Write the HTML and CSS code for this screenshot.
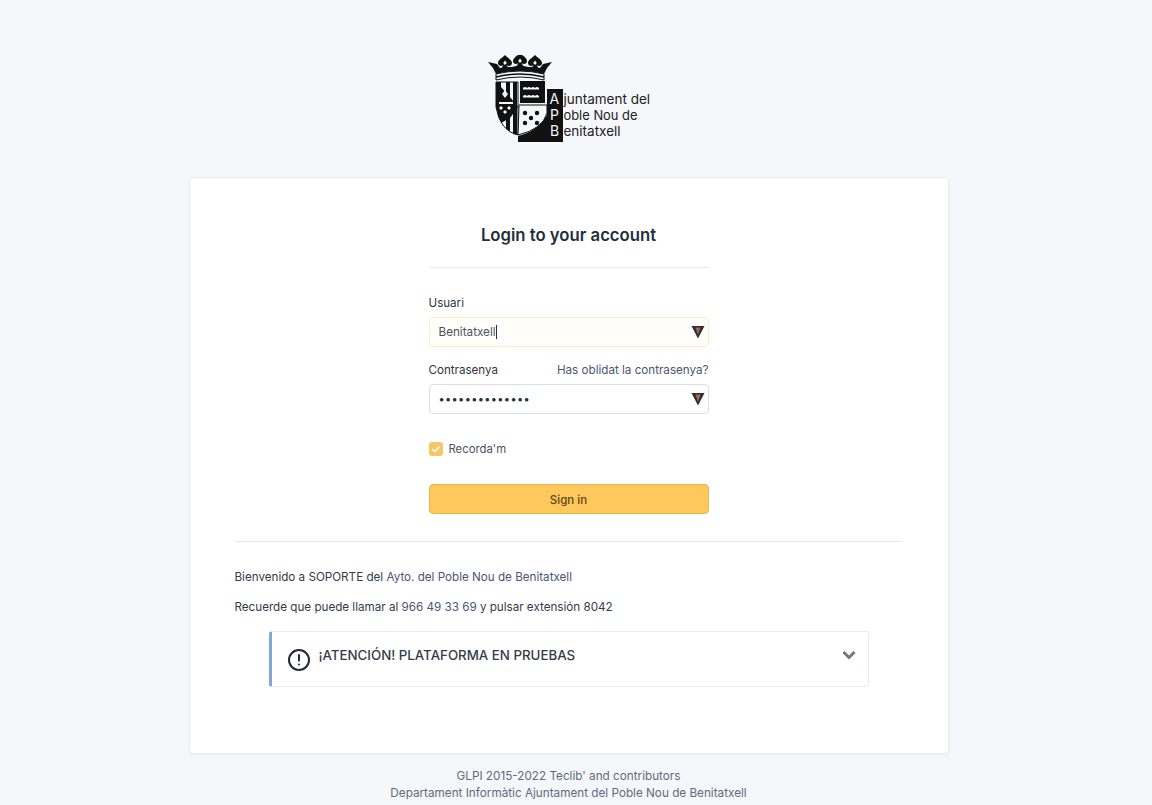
FILE: index.html
```html
<!DOCTYPE html>
<html lang="ca">
<head>
<meta charset="utf-8">
<title>Login</title>
<link rel="stylesheet" href="styles.css">
</head>
<body>
<div class="page">
  <header class="logo-wrap">
    <svg class="logo" width="166" height="90" viewBox="0 0 166 90" xmlns="http://www.w3.org/2000/svg">
      <defs>
        <g id="spade">
          <path d="M0 -8 C2.500 -5 7 -3.500 7 0 C7 3 3.500 4 1.800 2 L4 7 L-4 7 L-1.800 2 C-3.500 4 -7 3 -7 0 C-7 -3.500 -2.500 -5 0 -8 Z" fill="#111"/>
          <path d="M0 -2.500 L1.800 0 L0 2 L-1.800 0 Z" fill="#f5f7fb"/>
        </g>
      </defs>
      <path d="M0 7 L9 9 L12 13 L17 12 L24 12 L32 10 L40 12 L47 12 L52 13 L55 9 L64 7 L59 13 L56 19 Q32 13 8 19 L5 13 Z" fill="#111"/>
      <use href="#spade" x="17" y="8"/>
      <use href="#spade" x="32" y="6"/>
      <use href="#spade" x="47" y="8"/>
      <path d="M8 19 Q32 13 56 19 L56 25 Q32 19 8 25 Z" fill="#f5f7fb" stroke="#111" stroke-width="1"/>
      <path d="M8 22 Q32 16 56 22" fill="none" stroke="#111" stroke-width="1.500"/>
      <!-- shield left half -->
      <path d="M8 27 H30 V80 Q12 76 8 52 Z" fill="#f5f7fb" stroke="#111" stroke-width="1"/>
      <path d="M8 27 H13 V64 Q9 58 8 52 Z M18 27 H22 V76 L18 74 Z M25 27 H29 V80 L25 79 Z" fill="#111"/>
      <path d="M13 32 L22 42 L30 52 L22 63 L13 68 L10 60 L8 51 L13 44 Z" fill="#111"/>
      <g fill="#f5f7fb">
        <path d="M17 35 l3 4 l-3 4 l-3 -4 Z"/>
        <rect x="11" y="47" width="14" height="2"/>
        <path d="M13 51 l2 2 l-2 2 l-2 -2 Z M21 51 l2 2 l-2 2 l-2 -2 Z M17 55 l2 2 l-2 2 l-2 -2 Z"/>
      </g>
      <!-- shield right quarters -->
      <rect x="32" y="26" width="25" height="22" fill="#111"/>
      <path d="M35 33 q2 -2 4 0 q2 -2 4 0 q2 -2 4 0 q2 -2 4 0 v1.500 h-16 Z M35 41 q2 -2 4 0 q2 -2 4 0 q2 -2 4 0 q2 -2 4 0 v1.500 h-16 Z" fill="#f5f7fb"/>
      <path d="M31 50 H59 V58 Q55 74 30 80 Z" fill="#f5f7fb" stroke="#111" stroke-width="1"/>
      <g fill="#111">
        <circle cx="37" cy="58" r="2.200"/><circle cx="49" cy="58" r="2.200"/><circle cx="43" cy="63" r="2.200"/><circle cx="37" cy="68" r="2.200"/><circle cx="49" cy="68" r="2.200"/>
      </g>
      <!-- initials block -->
      <path d="M59 34 H75 V87 H30 V81 Q50 76 59 60 Z" fill="#111"/>
      <g class="logo-letters">
        <text x="61.500" y="49" class="logo-cap">A</text>
        <text x="62" y="65" class="logo-cap">P</text>
        <text x="62" y="81" class="logo-cap">B</text>
        <text x="75.500" y="49">juntament del</text>
        <text x="75.500" y="65" class="logo-mid">oble Nou de</text>
        <text x="75.500" y="81">enitatxell</text>
      </g>
    </svg>
  </header>

  <main class="card">
    <h1 class="title">Login to your account</h1>
    <form class="form">
      <div class="field">
        <div class="label-row"><label class="label">Usuari</label></div>
        <div class="input input-focus">
          <span class="value">Benitatxell</span><span class="caret"></span>
          <svg class="vault" width="14" height="14" viewBox="0 0 14 14"><path d="M0.500 1 H13.500 L7 13.500 Z" fill="#2a2f38"/><path d="M4.500 2.500 H9.500 L7 10 Z" fill="#b4613c"/></svg>
        </div>
      </div>
      <div class="field field-pass">
        <div class="label-row"><label class="label">Contrasenya</label><a class="link small-link">Has oblidat la contrasenya?</a></div>
        <div class="input">
          <span class="dots">••••••••••••••</span>
          <svg class="vault" width="14" height="14" viewBox="0 0 14 14"><path d="M0.500 1 H13.500 L7 13.500 Z" fill="#2a2f38"/><path d="M4.500 2.500 H9.500 L7 10 Z" fill="#b4613c"/></svg>
        </div>
      </div>
      <div class="remember">
        <span class="check"><svg width="14" height="14" viewBox="0 0 14 14"><path d="M3.500 7.200 L6 9.500 L10.500 4.800" fill="none" stroke="#fff" stroke-width="1.600"/></svg></span>
        <span class="remember-text">Recorda'm</span>
      </div>
      <button type="button" class="signin">Sign in</button>
    </form>
    <hr class="divider">
    <p class="msg">Bienvenido a SOPORTE del <a class="link">Ayto. del Poble Nou de Benitatxell</a></p>
    <p class="msg msg-2">Recuerde que puede llamar al <a class="link">966 49 33 69</a> y pulsar extensión 8042</p>
    <section class="alert">
      <svg class="alert-icon" width="24" height="24" viewBox="0 0 24 24" fill="none" stroke="#1e293b" stroke-width="2" stroke-linecap="round"><circle cx="12" cy="12" r="10"/><path d="M12 7 V12.500"/><path d="M12 16.500 V16.600"/></svg>
      <span class="alert-title">¡ATENCIÓN! PLATAFORMA EN PRUEBAS</span>
      <svg class="chev" width="14" height="10" viewBox="0 0 14 10"><path d="M1.500 2 L7 7.500 L12.500 2" fill="none" stroke="#6e7582" stroke-width="2.800"/></svg>
    </section>
  </main>

  <footer class="foot">
    <div>GLPI 2015-2022 Teclib' and contributors</div>
    <div>Departament Informàtic Ajuntament del Poble Nou de Benitatxell</div>
  </footer>
</div>
</body>
</html>
```
FILE: styles.css
```css
* { box-sizing: border-box; }
html, body { margin: 0; height: 100%; }
body {
  background: #f5f7fb;
  font-family: Inter, "Liberation Sans", sans-serif;
  color: #232e3c;
  font-size: 12px;
  overflow: hidden;
}
.page { width: 1137px; height: 805px; display: flex; flex-direction: column; align-items: center; }
.logo-wrap { height: 177px; width: 760px; padding: 55px 0 0 299px; }
.logo { display: block; }
.logo-letters text { font-family: Inter, "Liberation Sans", sans-serif; font-size: 13.500px; fill: #222; }
.logo-letters .logo-cap { fill: #f5f7fb; font-size: 14px; }
.logo-letters .logo-mid { font-size: 12.900px; }
.card {
  width: 760px;
  height: 577px;
  background: #fff;
  border: 1px solid #eaecf1;
  border-radius: 4px;
  box-shadow: 0 1px 3px rgba(35,46,60,.05);
  padding: 46px 45px 0;
  display: flex;
  flex-direction: column;
  align-items: stretch;
}
.title {
  width: 280px;
  align-self: center;
  margin: 0;
  padding-bottom: 21px;
  height: 44px;
  border-bottom: 1px solid #e6e8ee;
  text-align: center;
  font-size: 16.700px;
  line-height: 22px;
  font-weight: 600;
  color: #232e3c;
}
.form { width: 280px; align-self: center; margin-top: 26px; display: flex; flex-direction: column; }
.label-row { display: flex; justify-content: space-between; height: 18px; line-height: 18px; margin-bottom: 5px; }
.label { font-size: 11.600px; color: #2c3542; }
.small-link { font-size: 11.650px; }
.link { color: #4a5578; }
.input {
  height: 30px;
  border: 1px solid #d9dde5;
  border-radius: 4px;
  background: #fff;
  display: flex;
  align-items: center;
  padding: 0 3px 0 9px;
  position: relative;
  font-size: 11.700px;
  color: #4a5260;
}
.input-focus { border-color: #fbedc4; background: #fffefb; }
.value { line-height: 14px; }
.caret { width: 1px; height: 14px; background: #232e3c; }
.vault { margin-left: auto; }
.field-pass { margin-top: 14px; }
.dots { font-size: 11px; letter-spacing: 0.350px; color: #232e3c; }
.remember { display: flex; align-items: center; gap: 6px; margin-top: 28px; height: 14px; }
.check { width: 14px; height: 14px; border-radius: 3px; background: #f7c766; display: block; }
.check svg { display: block; }
.remember-text { font-size: 11.300px; color: #4a5260; }
.signin {
  margin-top: 28px;
  height: 30px;
  background: #fec85c;
  border: 1px solid #e6b655;
  border-radius: 4px;
  font-family: inherit;
  font-size: 11.500px;
  font-weight: 500;
  color: #5d4618;
  padding: 1px 0 0;
}
.divider { width: 667px; margin: 27px 0 0; border: 0; border-top: 1px solid #e6e8ee; height: 1px; }
.msg { margin: 27px 0 0; font-size: 11.650px; line-height: 16px; color: #343c48; }
.msg-2 { margin-top: 14px; }
.alert {
  width: 600px;
  height: 56px;
  margin: 16px 0 0 34px;
  border: 1px solid #e8eaef;
  border-left: 3px solid #7ea8d6;
  border-radius: 3px;
  background: #fff;
  display: flex;
  align-items: flex-start;
  padding: 15px 12px 0 15px;
}
.alert-icon { flex: none; margin-top: 1px; }
.alert-title { margin-left: 8px; font-size: 13.300px; line-height: 17px; font-weight: 500; color: #343c48; }
.chev { margin-left: auto; margin-top: 3px; }
.foot { margin-top: 14px; text-align: center; font-size: 11.730px; line-height: 17px; color: #5f6b7c; }
```
